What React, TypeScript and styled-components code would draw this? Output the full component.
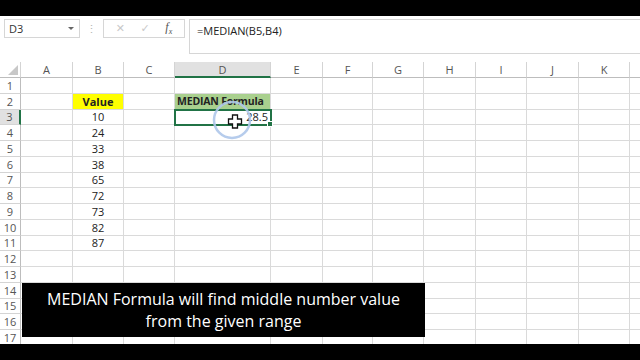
import styled, { createGlobalStyle } from "styled-components"

const GlobalStyle = createGlobalStyle`
  html, body {
    margin: 0;
    padding: 0;
    background: #000;
  }
`

const COLS = ["A", "B", "C", "D", "E", "F", "G", "H", "I", "J", "K", "L"]
const COL_WIDTHS = [52, 51, 51, 96, 52, 50, 51, 52, 51, 52, 51, 40]
const ROW_COUNT = 17
const values: Record<number, string> = {
  3: "10",
  4: "24",
  5: "33",
  6: "38",
  7: "65",
  8: "72",
  9: "73",
  10: "82",
  11: "87",
}

const App = () => {
  return (
    <Screen>
      <GlobalStyle />
      <BlackBar />
      <FormulaBar>
        <NameBox>
          <span>D3</span>
          <DropArrow />
        </NameBox>
        <Grip>⋮</Grip>
        <ButtonBox>
          <FxButton>✕</FxButton>
          <FxButton>✓</FxButton>
          <FxLabel>
            f<sub>x</sub>
          </FxLabel>
        </ButtonBox>
        <FormulaInput>=MEDIAN(B5,B4)</FormulaInput>
      </FormulaBar>

      <Sheet>
        <Corner>
          <svg width="10" height="10" viewBox="0 0 10 10">
            <polygon points="10,0 10,10 0,10" fill="#c8c8c8" />
          </svg>
        </Corner>
        {COLS.map((c) => (
          <ColHeader key={c} $active={c === "D"}>
            {/* column L is only partly on screen, its letter falls outside */}
            {c === "L" ? "" : c}
          </ColHeader>
        ))}

        {Array.from({ length: ROW_COUNT }, (_, i) => {
          const row = i + 1
          return [
            <RowHeader key={`h${row}`} $active={row === 3}>
              {row}
            </RowHeader>,
            ...COLS.map((c) => {
              if (c === "B" && row === 2)
                return (
                  <Cell key={c + row} $fill="#ffff00" $bold $align="center">
                    Value
                  </Cell>
                )
              if (c === "B" && values[row])
                return (
                  <Cell key={c + row} $align="center">
                    {values[row]}
                  </Cell>
                )
              if (c === "D" && row === 2)
                return (
                  <Cell key={c + row} $fill="#a9d08e" $bold $tight>
                    MEDIAN Formula
                  </Cell>
                )
              if (c === "D" && row === 3)
                return (
                  <SelectedCell key={c + row} $align="right">
                    28.5
                    <FillHandle />
                  </SelectedCell>
                )
              return <Cell key={c + row} />
            }),
          ]
        })}

        <ClickRing>
          <svg width="44" height="44" viewBox="0 0 44 44">
            <circle cx="22" cy="22" r="18" fill="none" stroke="#aec7ea" strokeWidth="2.5" opacity="0.9" />
            <path
              d="M22.5 17h5v4h4v5h-4v4h-5v-4h-4v-5h4z"
              fill="#fff"
              stroke="#111"
              strokeWidth="1.3"
            />
          </svg>
        </ClickRing>

        <Caption>
          MEDIAN Formula will find middle number value
          <br />
          from the given range
        </Caption>
      </Sheet>
      <BlackBar />
    </Screen>
  )
}

export default App

const Screen = styled.div`
  width: 640px;
  height: 360px;
  overflow: hidden;
  display: flex;
  flex-direction: column;
  background: #fff;
  font-family: "Open Sans", "Lato", sans-serif;
`

const BlackBar = styled.div`
  height: 16px;
  flex: none;
  background: #000;
`

const FormulaBar = styled.div`
  height: 46px;
  flex: none;
  display: flex;
  align-items: flex-start;
  padding: 3px 0 0 4px;
  box-sizing: border-box;
  background: #fff;
`

const NameBox = styled.div`
  width: 76px;
  height: 19px;
  box-sizing: border-box;
  border: 1px solid #d6d6d6;
  display: flex;
  align-items: center;
  justify-content: space-between;
  padding: 0 5px 0 4px;
  font-size: 11px;
  color: #333;
`

const DropArrow = styled.span`
  width: 0;
  height: 0;
  border-left: 3px solid transparent;
  border-right: 3px solid transparent;
  border-top: 3px solid #666;
`

const Grip = styled.div`
  width: 23px;
  text-align: center;
  color: #b5b5b5;
  font-size: 11px;
  line-height: 19px;
`

const ButtonBox = styled.div`
  width: 82px;
  height: 19px;
  box-sizing: border-box;
  border: 1px solid #d6d6d6;
  display: flex;
  align-items: center;
  justify-content: space-around;
  padding: 0 4px;
`

const FxButton = styled.span`
  font-size: 11px;
  color: #c9c9c9;
  font-family: "DejaVu Sans", sans-serif;
`

const FxLabel = styled.span`
  font-family: "Liberation Serif", serif;
  font-style: italic;
  font-size: 12px;
  color: #555;

  sub {
    font-size: 8px;
  }
`

const FormulaInput = styled.div`
  flex: 1;
  margin-left: 4px;
  height: 35px;
  box-sizing: border-box;
  border: 1px solid #d6d6d6;
  border-right: none;
  padding: 3px 0 0 7px;
  font-size: 11px;
  color: #222;
`

const Sheet = styled.div`
  position: relative;
  flex: 1;
  display: grid;
  grid-template-columns: 21px ${COL_WIDTHS.map((w) => `${w}px`).join(" ")};
  grid-template-rows: 16px repeat(${ROW_COUNT}, 15.75px);
  overflow: hidden;
  font-size: 11px;
  color: #222;
`

const Corner = styled.div`
  border-right: 1px solid #d4d4d4;
  border-bottom: 1px solid #bdbdbd;
  display: flex;
  align-items: flex-end;
  justify-content: flex-end;
  padding: 0 2px 2px 0;
`

const ColHeader = styled.div<{ $active?: boolean }>`
  display: flex;
  align-items: center;
  justify-content: center;
  color: #555;
  background: ${(p) => (p.$active ? "#e1e1e1" : "#fff")};
  border-right: 1px solid #d4d4d4;
  border-bottom: ${(p) => (p.$active ? "2px solid #217346" : "1px solid #bdbdbd")};
`

const RowHeader = styled.div<{ $active?: boolean }>`
  display: flex;
  align-items: center;
  justify-content: center;
  color: #555;
  background: ${(p) => (p.$active ? "#e1e1e1" : "#fff")};
  border-right: ${(p) => (p.$active ? "2px solid #217346" : "1px solid #bdbdbd")};
  border-bottom: 1px solid #d4d4d4;
`

const Cell = styled.div<{ $fill?: string; $bold?: boolean; $align?: string; $tight?: boolean }>`
  display: flex;
  align-items: center;
  justify-content: ${(p) =>
    p.$align === "center" ? "center" : p.$align === "right" ? "flex-end" : "flex-start"};
  padding: 0 2px;
  white-space: nowrap;
  overflow: hidden;
  background: ${(p) => p.$fill ?? "#fff"};
  font-weight: ${(p) => (p.$bold ? 700 : 400)};
  font-size: ${(p) => (p.$tight ? "10.5px" : "11px")};
  letter-spacing: ${(p) => (p.$tight ? "-0.2px" : "normal")};
  border-right: 1px solid #dadada;
  border-bottom: 1px solid #dadada;
`

const SelectedCell = styled(Cell)`
  position: relative;
  overflow: visible;
  outline: 2px solid #217346;
  outline-offset: -1px;
  z-index: 1;
`

const FillHandle = styled.span`
  position: absolute;
  right: -3px;
  bottom: -3px;
  width: 4px;
  height: 4px;
  background: #217346;
  border: 1px solid #fff;
`

const ClickRing = styled.div`
  position: absolute;
  left: 210px;
  top: 36px;
  z-index: 2;
  pointer-events: none;
`

const Caption = styled.div`
  position: absolute;
  left: 22px;
  top: 221px;
  width: 403px;
  height: 54px;
  background: #000;
  color: #fff;
  font-size: 16px;
  line-height: 22px;
  text-align: center;
  padding-top: 5px;
  box-sizing: border-box;
  z-index: 3;
`
